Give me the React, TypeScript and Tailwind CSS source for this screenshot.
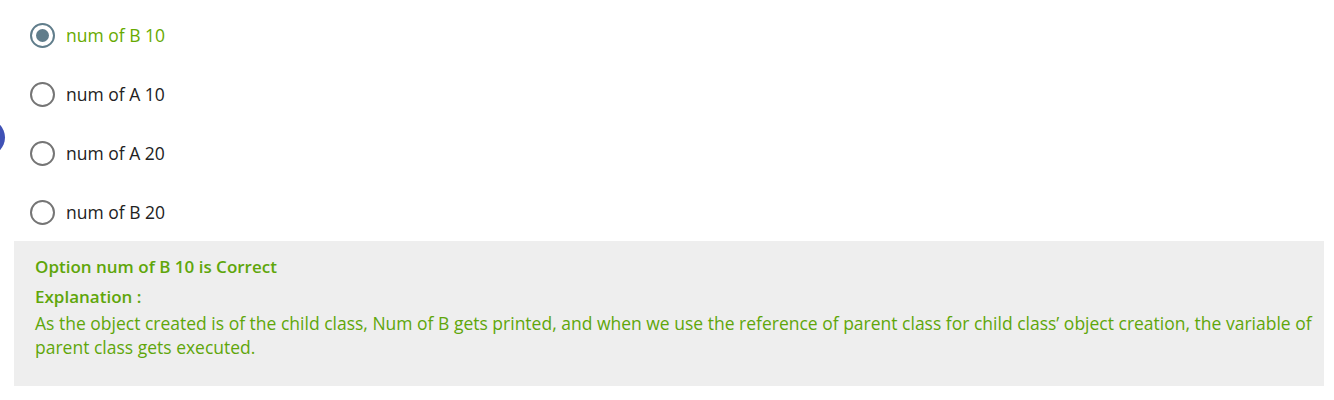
import React from "react";

const options = [
  { label: "num of B 10", selected: true },
  { label: "num of A 10", selected: false },
  { label: "num of A 20", selected: false },
  { label: "num of B 20", selected: false },
];

export default function App() {
  return (
    <div
      className="relative w-[1334px] h-[400px] bg-white overflow-hidden"
      style={{ fontFamily: '"Open Sans", sans-serif' }}
    >
      <div className="absolute left-[-32px] top-[119px] w-[37px] h-[37px] rounded-full bg-[#3f51b5]" />
      <div className="flex flex-col pl-[30px] pt-[23px]">
        {options.map((o, i) => (
          <div key={i} className="flex items-center h-[24px] mb-[35px] last:mb-0">
            {o.selected ? (
              <div className="w-[25px] h-[25px] rounded-full border-2 border-[#607d8b] flex items-center justify-center">
                <div className="w-[13px] h-[13px] rounded-full bg-[#607d8b]" />
              </div>
            ) : (
              <div className="w-[25px] h-[25px] rounded-full border-2 border-[#757575]" />
            )}
            <span
              className={
                "ml-[11px] text-[17.5px] " +
                (o.selected ? "text-[#66aa00]" : "text-[#222222]")
              }
            >
              {o.label}
            </span>
          </div>
        ))}
      </div>
      <div className="mx-[14px] mt-[17px] w-[1310px] bg-[#eeeeee] pl-[21px] pr-[10px] pt-[14px] pb-[27px] text-[#5fa60a]">
        <div className="font-semibold leading-[24px] text-[17px]">Option num of B 10 is Correct</div>
        <div className="font-semibold leading-[24px] mt-[6px] text-[17px]">Explanation :</div>
        <div className="leading-[24px] mt-[2px] text-[17.5px]">
          As the object created is of the child class, Num of B gets printed, and when we use the reference of parent class for child class’ object creation, the variable of parent class gets executed.
        </div>
      </div>
    </div>
  );
}
